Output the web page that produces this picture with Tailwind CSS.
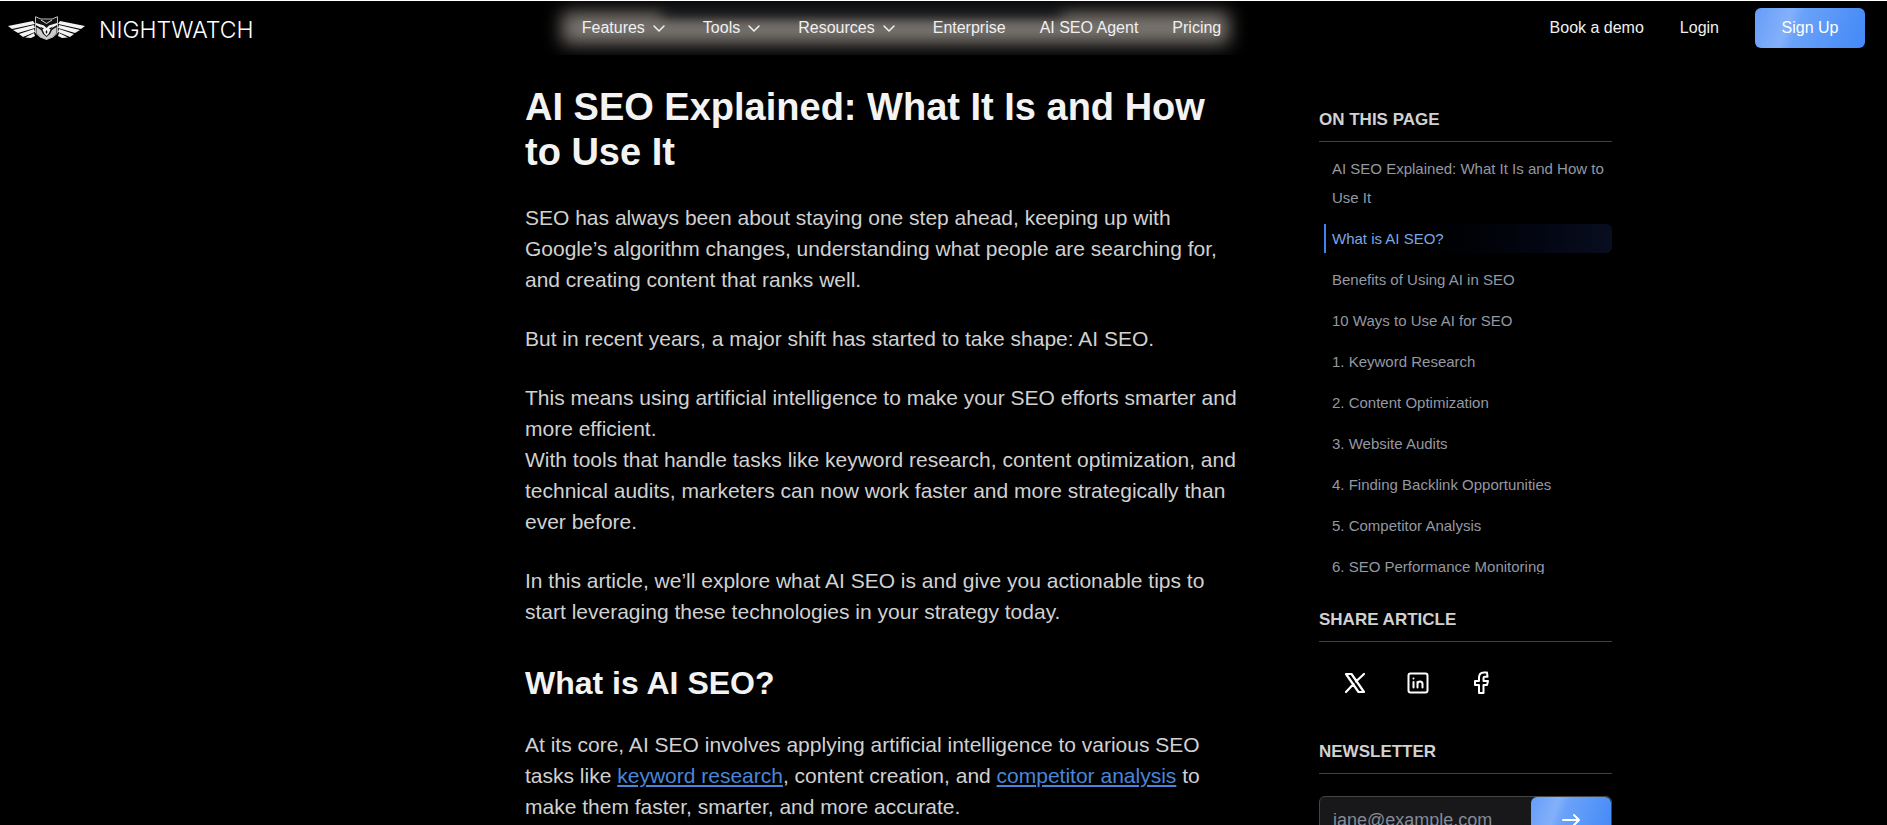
<!DOCTYPE html>
<html lang="en">

<head>
    <meta charset="UTF-8" />
    <meta name="viewport" content="width=device-width, initial-scale=1.0" />
    <title>AI SEO Explained: What It Is and How to Use It</title>
    <script src="https://cdn.jsdelivr.net/npm/@tailwindcss/browser@4"></script>
</head>

<body class="h-screen overflow-hidden bg-black font-['Liberation_Sans',Arial,sans-serif] text-[#d1d1d1]">

    <!-- Header -->
    <header class="relative z-10 h-[55px] overflow-hidden border-t border-white bg-black pl-2 pr-[22px] flex items-start justify-between text-base text-[#f0f0f0]">
        <a href="#" class="mt-[7px] h-10 flex items-center gap-[14px]">
            <svg class="w-[77px] h-[25px]" viewBox="0 0 77 25" fill="#f4f4f4">
                <path d="M0 10 L25 5 L27 8 L4 13 Z" />
                <path d="M5 14 L26 9 L27 12 L10 17 Z" />
                <path d="M11 18 L26 13 L27 16 L15 21 Z" />
                <path d="M17 21.500 L26 17 L27 20 L23 22 Z" />
                <path d="M77 10 L52 5 L50 8 L73 13 Z" />
                <path d="M72 14 L51 9 L50 12 L67 17 Z" />
                <path d="M66 18 L51 13 L50 16 L62 21 Z" />
                <path d="M60 21.500 L51 17 L50 20 L54 22 Z" />
                <path d="M27.500 .7 L33 3 H44 L49.500 .7 V17 L45 21 L38.500 23.500 L32 21 L27.500 17 Z" fill="#111" stroke="#bbb" stroke-width="1" />
                <path d="M28 7 L36 9.500 L38.500 12 L41 9.500 L49 7 V9 L43 12.500 L40.500 18 L38.500 20 L36.500 18 L34 12.500 L28 9 Z" />
                <path d="M33 4 L38.500 7.500 L44 4" fill="none" stroke="#ddd" stroke-width="1" />
                <path d="M28.500 11 L33 14 L35 18 L38.500 21 L42 18 L44 14 L48.500 11 V17 L44.500 21 L38.500 23.500 L32.500 21 L28.500 17 Z" fill="#ccc" />
                <path d="M32 10.500 L36 12.500 L34.500 13.500 Z M45 10.500 L41 12.500 L42.500 13.500 Z M38.500 14 L39.500 16 L38.500 18 L37.500 16 Z" fill="#111" />
            </svg>
            <span class="pt-1 font-['Inter',sans-serif] font-light text-[23px] leading-6 text-white">NIGHTWATCH</span>
        </a>

        <nav class="relative mt-[7px] h-10 flex items-center gap-[34px]">
            <!-- blurred glow behind the menu -->
            <div class="absolute -left-5 -right-2 top-1 h-8 bg-[#7b7671] blur-[9px]"></div>
            <div class="absolute left-[80px] -top-1 h-3 w-[400px] bg-[#05090d] blur-[7px]"></div>
            <a href="#" class="relative flex items-center gap-1">Features
                <svg class="w-5 h-5" viewBox="0 0 20 20" fill="none" stroke="currentColor" stroke-width="1.500" stroke-linecap="round" stroke-linejoin="round"><path d="M5 8l5 5 5-5" /></svg>
            </a>
            <a href="#" class="relative flex items-center gap-1">Tools
                <svg class="w-5 h-5" viewBox="0 0 20 20" fill="none" stroke="currentColor" stroke-width="1.500" stroke-linecap="round" stroke-linejoin="round"><path d="M5 8l5 5 5-5" /></svg>
            </a>
            <a href="#" class="relative flex items-center gap-1">Resources
                <svg class="w-5 h-5" viewBox="0 0 20 20" fill="none" stroke="currentColor" stroke-width="1.500" stroke-linecap="round" stroke-linejoin="round"><path d="M5 8l5 5 5-5" /></svg>
            </a>
            <a href="#" class="relative">Enterprise</a>
            <a href="#" class="relative">AI SEO Agent</a>
            <a href="#" class="relative">Pricing</a>
        </nav>

        <div class="mt-[7px] h-10 flex items-center gap-9">
            <a href="#">Book a demo</a>
            <a href="#">Login</a>
            <button type="button" class="h-10 w-[110px] rounded-md bg-[linear-gradient(110deg,#659df9_0%,#84b0fa_30%,#6aa2f9_40%,#4288f7_100%)] text-white">Sign Up</button>
        </div>
    </header>

    <!-- Page -->
    <div class="mx-auto max-w-[1337px] flex">
        <div class="w-[250px] shrink-0"></div>

        <article class="flex-1 mt-[30px] text-[21px] leading-[31px]">
            <h1 class="mb-[27px] text-[38px] leading-[45px] font-bold text-[#f3f3f3]">AI SEO Explained: What It Is and How<br>to Use It</h1>
            <p class="mb-7">SEO has always been about staying one step ahead, keeping up with<br>Google’s algorithm changes, understanding what people are searching for,<br>and creating content that ranks well.</p>
            <p class="mb-7">But in recent years, a major shift has started to take shape: AI SEO.</p>
            <p class="mb-7">This means using artificial intelligence to make your SEO efforts smarter and<br>more efficient.<br>With tools that handle tasks like keyword research, content optimization, and<br>technical audits, marketers can now work faster and more strategically than<br>ever before.</p>
            <p class="mb-9">In this article, we’ll explore what AI SEO is and give you actionable tips to<br>start leveraging these technologies in your strategy today.</p>
            <h2 class="mb-[26px] text-[32px] leading-10 font-bold text-[#f3f3f3]">What is AI SEO?</h2>
            <p>At its core, AI SEO involves applying artificial intelligence to various SEO<br>tasks like <a href="#" class="text-[#4a86d8] underline decoration-2 underline-offset-2">keyword research</a>, content creation, and <a href="#" class="text-[#4a86d8] underline decoration-2 underline-offset-2">competitor analysis</a> to<br>make them faster, smarter, and more accurate.</p>
        </article>

        <aside class="ml-[62px] mt-[53px] w-[293px] shrink-0">
            <h2 class="pb-[9px] border-b border-[#374151] text-[17px] leading-6 font-bold">ON THIS PAGE</h2>
            <ul class="mt-3 h-[420px] overflow-hidden space-y-3 text-[15px] leading-[29px] text-[#9498a3]">
                <li class="pl-[13px]"><a href="#">AI SEO Explained: What It Is and How to Use It</a></li>
                <li class="ml-[5px] pl-[6px] border-l-2 border-[#3b82f6] rounded-r-md bg-linear-to-r from-black to-[#080e20] text-[#7ba7e2]"><a href="#">What is AI SEO?</a></li>
                <li class="pl-[13px]"><a href="#">Benefits of Using AI in SEO</a></li>
                <li class="pl-[13px]"><a href="#">10 Ways to Use AI for SEO</a></li>
                <li class="pl-[13px]"><a href="#">1. Keyword Research</a></li>
                <li class="pl-[13px]"><a href="#">2. Content Optimization</a></li>
                <li class="pl-[13px]"><a href="#">3. Website Audits</a></li>
                <li class="pl-[13px]"><a href="#">4. Finding Backlink Opportunities</a></li>
                <li class="pl-[13px]"><a href="#">5. Competitor Analysis</a></li>
                <li class="pl-[13px]"><a href="#">6. SEO Performance Monitoring</a></li>
            </ul>

            <h2 class="mt-[34px] pb-[9px] border-b border-[#374151] text-[17px] leading-6 font-bold">SHARE ARTICLE</h2>
            <div class="mt-[29px] pl-6 flex gap-[39px] text-white">
                <a href="#" aria-label="X">
                    <svg class="w-6 h-6" viewBox="0 0 24 24" fill="none" stroke="currentColor" stroke-width="2.200" stroke-linecap="round" stroke-linejoin="round"><path d="M3 3l12.500 18H21L8.500 3H3zM3 21l7.500-8M13 10.500L21 3" /></svg>
                </a>
                <a href="#" aria-label="LinkedIn">
                    <svg class="w-6 h-6" viewBox="0 0 24 24" fill="none" stroke="currentColor" stroke-width="2" stroke-linecap="round" stroke-linejoin="round"><rect x="2.500" y="2.500" width="19" height="19" rx="2" /><path d="M7.500 11v5.500M7.500 7.500v.1M11.500 16.500V11M11.500 13a2.500 2.500 0 0 1 5 0v3.500" /></svg>
                </a>
                <a href="#" aria-label="Facebook">
                    <svg class="w-6 h-6" viewBox="0 0 24 24" fill="none" stroke="currentColor" stroke-width="2" stroke-linecap="round" stroke-linejoin="round"><path d="M18 1.500h-3c-3 0-5 2-5 5v3.500H6v4h4v8h4.500v-8h3.500l1-4h-4.500V7c0-.8.5-1.300 1.300-1.300H18.500z" /></svg>
                </a>
            </div>

            <h2 class="mt-[45px] pb-[9px] border-b border-[#374151] text-[17px] leading-6 font-bold">NEWSLETTER</h2>
            <form class="mt-[22px] h-12 flex overflow-hidden rounded-md border border-[#444444] bg-[#18181b]">
                <input type="email" aria-label="Email address" placeholder="jane@example.com" class="min-w-0 flex-1 pl-[13px] text-lg outline-none placeholder:text-[#858b98]" />
                <button type="submit" aria-label="Subscribe" class="w-20 rounded-md bg-[linear-gradient(110deg,#659df9_0%,#84b0fa_30%,#6aa2f9_40%,#4288f7_100%)] flex items-center justify-center text-white">
                    <svg class="w-6 h-6" viewBox="0 0 24 24" fill="none" stroke="currentColor" stroke-width="2" stroke-linecap="round" stroke-linejoin="round"><path d="M4 12h16M15 7l5 5-5 5" /></svg>
                </button>
            </form>
        </aside>
    </div>

</body>

</html>
